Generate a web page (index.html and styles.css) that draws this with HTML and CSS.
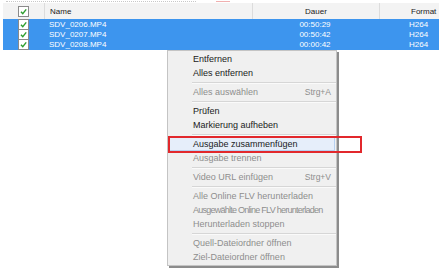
FILE: index.html
```html
<!DOCTYPE html>
<html>
<head>
<title>Dateiliste</title>
<link rel="stylesheet" href="styles.css">
</head>
<body>
<div class="topstrip"><span class="frag"></span><span class="frag red"></span></div>
<div class="list">
  <div class="row head">
    <div class="c-chk"><span class="chk"><svg viewBox="0 0 10 10"><path d="M2.2 5.2 L4.2 7.4 L8 2.6"/></svg></span></div>
    <div class="c-name">Name</div>
    <div class="c-dur">Dauer</div>
    <div class="c-fmt">Format</div>
  </div>
  <div class="row sel">
    <div class="c-chk"><span class="chk"><svg viewBox="0 0 10 10"><path d="M2.2 5.2 L4.2 7.4 L8 2.6"/></svg></span></div>
    <div class="c-name">SDV_0206.MP4</div>
    <div class="c-dur">00:50:29</div>
    <div class="c-fmt">H264</div>
  </div>
  <div class="row sel">
    <div class="c-chk"><span class="chk"><svg viewBox="0 0 10 10"><path d="M2.2 5.2 L4.2 7.4 L8 2.6"/></svg></span></div>
    <div class="c-name">SDV_0207.MP4</div>
    <div class="c-dur">00:50:42</div>
    <div class="c-fmt">H264</div>
  </div>
  <div class="row sel">
    <div class="c-chk"><span class="chk"><svg viewBox="0 0 10 10"><path d="M2.2 5.2 L4.2 7.4 L8 2.6"/></svg></span></div>
    <div class="c-name">SDV_0208.MP4</div>
    <div class="c-dur">00:00:42</div>
    <div class="c-fmt">H264</div>
  </div>
</div>

<div class="menu">
  <div class="item">Entfernen</div>
  <div class="item">Alles entfernen</div>
  <div class="sep"></div>
  <div class="item off">Alles auswählen<span class="key">Strg+A</span></div>
  <div class="sep"></div>
  <div class="item">Prüfen</div>
  <div class="item">Markierung aufheben</div>
  <div class="sep"></div>
  <div class="item hot">Ausgabe zusammenfügen</div>
  <div class="item off">Ausgabe trennen</div>
  <div class="sep"></div>
  <div class="item off">Video URL einfügen<span class="key">Strg+V</span></div>
  <div class="sep"></div>
  <div class="item off">Alle Online FLV herunterladen</div>
  <div class="item off tight">Ausgewählte Online FLV herunterladen</div>
  <div class="item off">Herunterladen stoppen</div>
  <div class="sep"></div>
  <div class="item off">Quell-Dateiordner öffnen</div>
  <div class="item off">Ziel-Dateiordner öffnen</div>
</div>
<div class="mark"></div>
</body>
</html>
```

FILE: styles.css
```css
body {margin: 0;background: #fff;font-family: "Liberation Sans", Arial, sans-serif;color: #222;width: 439px;height: 278px;overflow: hidden;position: relative;}
.topstrip {height: 3px;display: flex;gap: 20px;padding-left: 6px;}
.frag {display: block;width: 190px;height: 1px;margin-top: 1px;border-top: 1px dotted #c8c8c8;}
.frag.red {width: 14px;border-top: 1px solid #f0b0b0;}
.list {margin-left: 3px;}
.row {display: flex;align-items: center;height: 10.4px;font-size: 8px;}
.row.head {height: 16px;background: #f3f3f3;}
.row.sel {background: #3d95ee;color: #fff;}
.c-chk {width: 41px;display: flex;justify-content: center;}
.c-name {width: 208px;padding-left: 5px;box-sizing: border-box;}
.c-dur {width: 126px;text-align: center;}
.c-fmt {flex: 1;padding-left: 31px;white-space: nowrap;}
.head .c-chk, .head .c-name, .head .c-dur {border-right: 1px solid #dcdcdc;height: 16px;display: flex;align-items: center;}
.head .c-chk {justify-content: center;}
.head .c-dur {justify-content: center;}
.chk {display: block;width: 9px;height: 9px;border: 1px solid #8a8a8a;background: #fff;}
.chk svg {display: block;width: 9px;height: 9px;}
.chk path {fill: none;stroke: #2f9e2f;stroke-width: 1.6;}
.menu {position: absolute;left: 167px;top: 50px;width: 168px;padding: 1px 0;background: #f0f0f0;border: 1px solid #c4c4c4;box-shadow: 2px 2px 0 #8c8c8c;font-size: 9px;}
.item {height: 14px;line-height: 14px;padding: 0 5px 0 25px;display: flex;justify-content: space-between;color: #1a1a1a;white-space: nowrap;}
.item.off {color: #8e8e8e;}
.item.tight {letter-spacing: -0.75px;}
.item.hot {margin: 0 1px;padding-left: 24px;background: #e6eefa;box-shadow: inset 0 0 0 1px #b6d0f0;}
.key {font-size: 8.5px;}
.sep {height: 5px;margin-left: 24px;display: flex;align-items: center;}
.sep::before {content: "";display: block;width: 100%;height: 1px;background: #d6d6d6;border-bottom: 1px solid #fafafa;}
.mark {position: absolute;left: 168px;top: 136px;width: 190px;height: 13px;border: 2px solid #e2282c;}
```
